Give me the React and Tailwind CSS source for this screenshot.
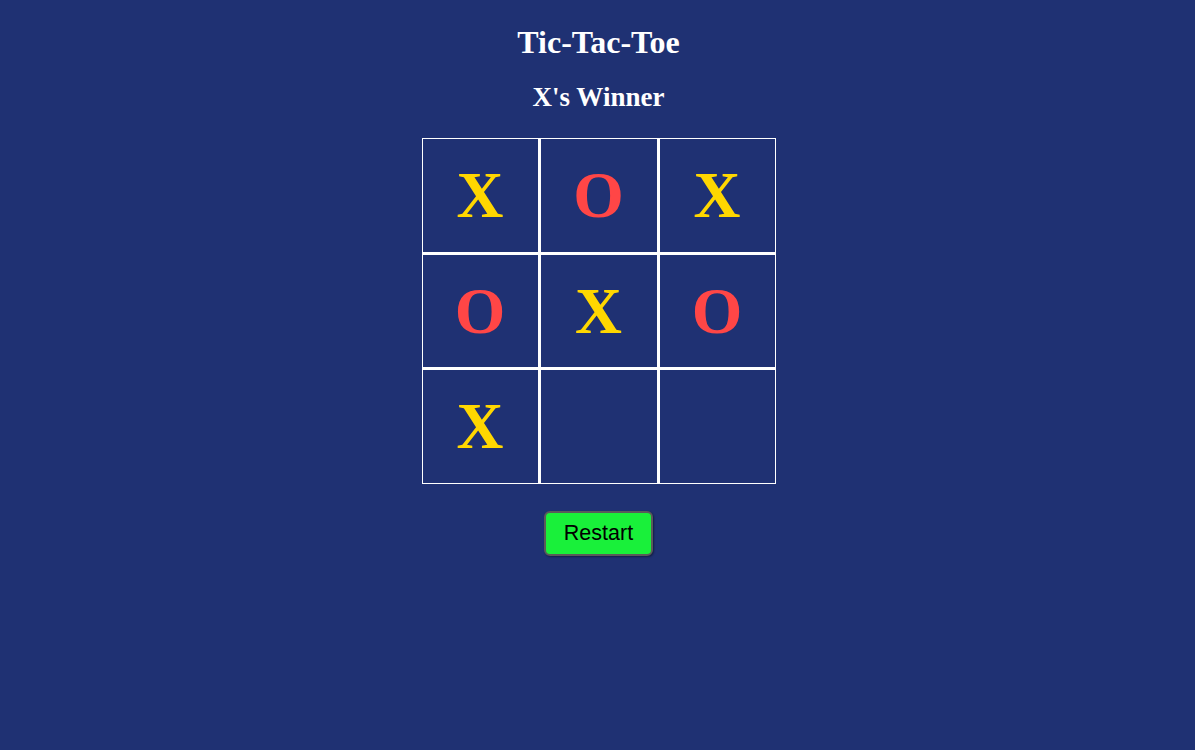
import { useState } from 'react'

const start = ['X', 'O', 'X', 'O', 'X', 'O', 'X', null, null]

export default function App() {
  const [board, setBoard] = useState(start)

  return (
    <div className="min-h-screen w-full bg-[#1f3173] flex flex-col items-center pl-[2px] text-white" style={{ fontFamily: '"Liberation Serif", "Times New Roman", serif' }}>
      {/* Heading */}
      <h1 className="mt-[24px] text-[32px] leading-[37px] font-bold">Tic-Tac-Toe</h1>
      <h2 className="mt-[21px] text-[27px] leading-[30px] font-bold">X's Winner</h2>

      {/* Board */}
      <div className="mt-[26px] p-px gap-[3px] bg-white grid grid-cols-[115px_116px_115px] grid-rows-[113px_112px_113px]">
        {board.map((v, i) => (
          <div key={i} className="bg-[#1f3173] flex items-center justify-center">
            {v && (
              <span className={v === 'X' ? 'text-[65px] leading-none font-bold text-[#ffd700]' : 'text-[65px] leading-none font-bold text-[#ff4646]'}>
                {v}
              </span>
            )}
          </div>
        ))}
      </div>

      <button
        onClick={() => setBoard(Array(9).fill(null))}
        className="mt-[27px] w-[109px] h-[45px] rounded-[6px] border-2 border-[#5a5a5a] bg-[#19f03a] text-black text-[21.5px] shadow-[1px_1px_2px_rgba(0,0,0,0.4)]"
        style={{ fontFamily: '"Liberation Sans", Arial, sans-serif' }}
      >
        Restart
      </button>
    </div>
  )
}
